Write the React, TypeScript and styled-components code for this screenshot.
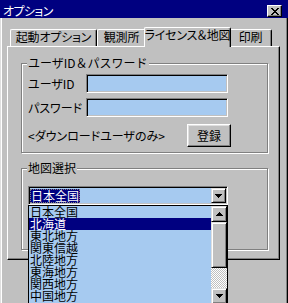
import styled, { createGlobalStyle } from 'styled-components';

const GlobalStyle = createGlobalStyle`
  html, body {
    margin: 0;
    padding: 0;
    background: #c0c0c0;
  }
  body {
    font-family: "Noto Sans CJK JP", "Noto Sans", sans-serif;
    font-size: 12px;
    font-feature-settings: "palt";
    color: #000;
  }
  * { box-sizing: border-box; }
`;

const TABS = [
  { label: '起動オプション', width: 87 },
  { label: '観測所', width: 49 },
  { label: 'ライセンス＆地図', width: 87, active: true },
  { label: '印刷', width: 43 },
];

const REGIONS = ['日本全国', '北海道', '東北地方', '関東信越', '北陸地方', '東海地方', '関西地方', '中国地方'];

const Window = styled.div`
  width: 288px;
  height: 303px;
  overflow: hidden;
  background: #c0c0c0;
  box-shadow: inset 1px 0 #dfdfdf, inset 2px 0 #fff, inset -1px 0 #000, inset -2px 0 #808080;
`;

const TitleBar = styled.div`
  height: 18px;
  background: #000080;
  color: #fff;
  display: flex;
  align-items: flex-end;
  padding: 0 6px 1px 3px;
`;

const TitleText = styled.span`
  line-height: 12px;
  height: 12px;
  letter-spacing: -0.6px;
`;

const CloseButton = styled.div`
  margin-left: auto;
  width: 15px;
  height: 12px;
  display: flex;
  align-items: center;
  justify-content: center;
  background: #c0c0c0;
  border: 1px solid;
  border-color: #fff #000 #000 #fff;
  box-shadow: inset -1px -1px #808080;
`;

const TabStrip = styled.div`
  position: relative;
  z-index: 1;
  display: flex;
  align-items: flex-start;
  height: 20px;
  margin-top: 9px;
  padding-left: 10px;
`;

const Tab = styled.div<{ $w: number; $active?: boolean }>`
  position: relative;
  z-index: ${(p) => (p.$active ? 2 : 1)};
  flex: none;
  width: ${(p) => p.$w}px;
  height: ${(p) => (p.$active ? 20 : 17)}px;
  margin: ${(p) => (p.$active ? '0 -2px' : '2px 0 0')};
  display: flex;
  justify-content: center;
  padding-top: 1px;
  line-height: 12px;
  letter-spacing: -0.2px;
  white-space: nowrap;
  background: #c0c0c0;
  border-top: 1px solid #fff;
  border-left: 1px solid #fff;
  border-right: 1px solid #000;
  border-radius: 2px 2px 0 0;
  box-shadow: inset -1px 0 #808080;
`;

const Panel = styled.div`
  margin: -1px 0 0 7px;
  width: 273px;
  height: 214px;
  border: 1px solid;
  border-color: #fff #000 #000 #fff;
  box-shadow: inset -1px -1px #808080;
  padding: 16px 0 0 13px;
`;

const GroupBox = styled.div<{ $h: number; $gap?: number }>`
  width: 247px;
  height: ${(p) => p.$h}px;
  margin-top: ${(p) => p.$gap ?? 0}px;
  border: 1px solid #808080;
  box-shadow: inset 1px 1px #fff, 1px 1px #fff;
  padding: 0 36px 0 6px;
`;

const GroupLabel = styled.div<{ $wide?: boolean }>`
  width: fit-content;
  margin: -7px 0 0 -1px;
  padding: 0 1px;
  line-height: 12px;
  height: 12px;
  background: #c0c0c0;
  white-space: nowrap;
  font-feature-settings: ${(p) => (p.$wide ? 'normal' : '"palt"')};
`;

const Row = styled.div<{ $gap: number; $h: number }>`
  display: flex;
  align-items: center;
  height: ${(p) => p.$h}px;
  margin-top: ${(p) => p.$gap}px;
`;

const FieldLabel = styled.span`
  width: 58px;
  flex: none;
  line-height: 12px;
  white-space: nowrap;
`;

const Note = styled.span`
  line-height: 12px;
  white-space: nowrap;
`;

const Field = styled.input`
  width: 142px;
  height: 19px;
  padding: 0 2px;
  border: 1px solid;
  border-color: #808080 #fff #fff #808080;
  box-shadow: inset 1px 1px #000, inset -1px -1px #c0c0c0;
  background: #a6caf0;
  font: inherit;
  outline: none;
`;

const Button = styled.button`
  margin-left: auto;
  width: 44px;
  height: 23px;
  padding: 0;
  background: #c0c0c0;
  color: #000;
  font: inherit;
  line-height: 12px;
  border: 1px solid;
  border-color: #fff #000 #000 #fff;
  box-shadow: inset -1px -1px #808080, inset 1px 1px #dfdfdf;
`;

const Combo = styled.div`
  position: relative;
  width: 200px;
  height: 19px;
  margin-top: 12px;
  display: flex;
  align-items: stretch;
  padding: 1px;
  border: 1px solid;
  border-color: #808080 #fff #fff #808080;
  box-shadow: inset 1px 1px #000, inset -1px -1px #c0c0c0;
  background: #a6caf0;
`;

const ComboValue = styled.span`
  align-self: center;
  height: 14px;
  line-height: 14px;
  padding: 0 1px;
  background: #000080;
  color: #fff;
  outline: 1px dotted #808080;
  outline-offset: -1px;
`;

const ArrowButton = styled.div<{ $h: number; $w?: number }>`
  flex: none;
  width: ${(p) => p.$w ?? 16}px;
  height: ${(p) => p.$h}px;
  margin-left: auto;
  display: flex;
  align-items: center;
  justify-content: center;
  background: #c0c0c0;
  border: 1px solid;
  border-color: #dfdfdf #000 #000 #dfdfdf;
  box-shadow: inset 1px 1px #fff, inset -1px -1px #808080;
`;

const DropList = styled.div`
  position: absolute;
  z-index: 5;
  left: -1px;
  top: 18px;
  width: 200px;
  height: 100px;
  display: flex;
  border: 1px solid #000;
  background: #a6caf0;
`;

const Items = styled.div`
  flex: 1;
  display: flex;
  flex-direction: column;
`;

const Item = styled.div<{ $sel?: boolean }>`
  height: 12px;
  line-height: 12px;
  padding-left: 1px;
  white-space: nowrap;
  background: ${(p) => (p.$sel ? '#000080' : 'transparent')};
  color: ${(p) => (p.$sel ? '#fff' : '#000')};
`;

const ScrollBar = styled.div`
  width: 16px;
  flex: none;
  display: flex;
  flex-direction: column;
`;

const Thumb = styled.div`
  height: 46px;
  background: #c0c0c0;
  border: 1px solid;
  border-color: #dfdfdf #000 #000 #dfdfdf;
  box-shadow: inset 1px 1px #fff, inset -1px -1px #808080;
`;

const Track = styled.div`
  height: 20px;
  background: repeating-conic-gradient(#c0c0c0 0 25%, #fff 0 50%) 0 0 / 2px 2px;
`;

const CloseGlyph = () => (
  <svg width="8" height="7" viewBox="0 0 8 7" shapeRendering="crispEdges">
    <path
      fill="#000"
      d="M0 0h2v1H0zM6 0h2v1H6zM1 1h2v1H1zM5 1h2v1H5zM2 2h4v1H2zM3 3h2v1H3zM2 4h4v1H2zM1 5h2v1H1zM5 5h2v1H5zM0 6h2v1H0zM6 6h2v1H6z"
    />
  </svg>
);

const Triangle = ({ up }: { up?: boolean }) => (
  <svg width="7" height="4" viewBox="0 0 7 4" shapeRendering="crispEdges">
    <path fill="#000" d={up ? 'M3 0h1v1H3zM2 1h3v1H2zM1 2h5v1H1zM0 3h7v1H0z' : 'M0 0h7v1H0zM1 1h5v1H1zM2 2h3v1H2zM3 3h1v1H3z'} />
  </svg>
);

const App = () => {
  return (
    <>
      <GlobalStyle />
      <Window>
        <TitleBar>
          <TitleText>オプション</TitleText>
          <CloseButton>
            <CloseGlyph />
          </CloseButton>
        </TitleBar>

        <TabStrip>
          {TABS.map((t) => (
            <Tab key={t.label} $w={t.width} $active={t.active}>
              {t.label}
            </Tab>
          ))}
        </TabStrip>

        <Panel>
          <GroupBox $h={90}>
            <GroupLabel $wide>ユーザID＆パスワード</GroupLabel>
            <Row $gap={5} $h={19}>
              <FieldLabel>ユーザID</FieldLabel>
              <Field readOnly value="" />
            </Row>
            <Row $gap={5} $h={19}>
              <FieldLabel>パスワード</FieldLabel>
              <Field readOnly type="password" value="" />
            </Row>
            <Row $gap={7} $h={23}>
              <Note>&lt;ダウンロードユーザのみ&gt;</Note>
              <Button type="button">登録</Button>
            </Row>
          </GroupBox>

          <GroupBox $h={82} $gap={15}>
            <GroupLabel>地図選択</GroupLabel>
            <Combo>
              <ComboValue>日本全国</ComboValue>
              <ArrowButton $h={15} $w={15}>
                <Triangle />
              </ArrowButton>
              <DropList>
                <Items>
                  {REGIONS.map((r, i) => (
                    <Item key={r} $sel={i === 1}>
                      {r}
                    </Item>
                  ))}
                </Items>
                <ScrollBar>
                  <ArrowButton $h={16}>
                    <Triangle up />
                  </ArrowButton>
                  <Thumb />
                  <Track />
                  <ArrowButton $h={16}>
                    <Triangle />
                  </ArrowButton>
                </ScrollBar>
              </DropList>
            </Combo>
          </GroupBox>
        </Panel>
      </Window>
    </>
  );
};

export default App;
